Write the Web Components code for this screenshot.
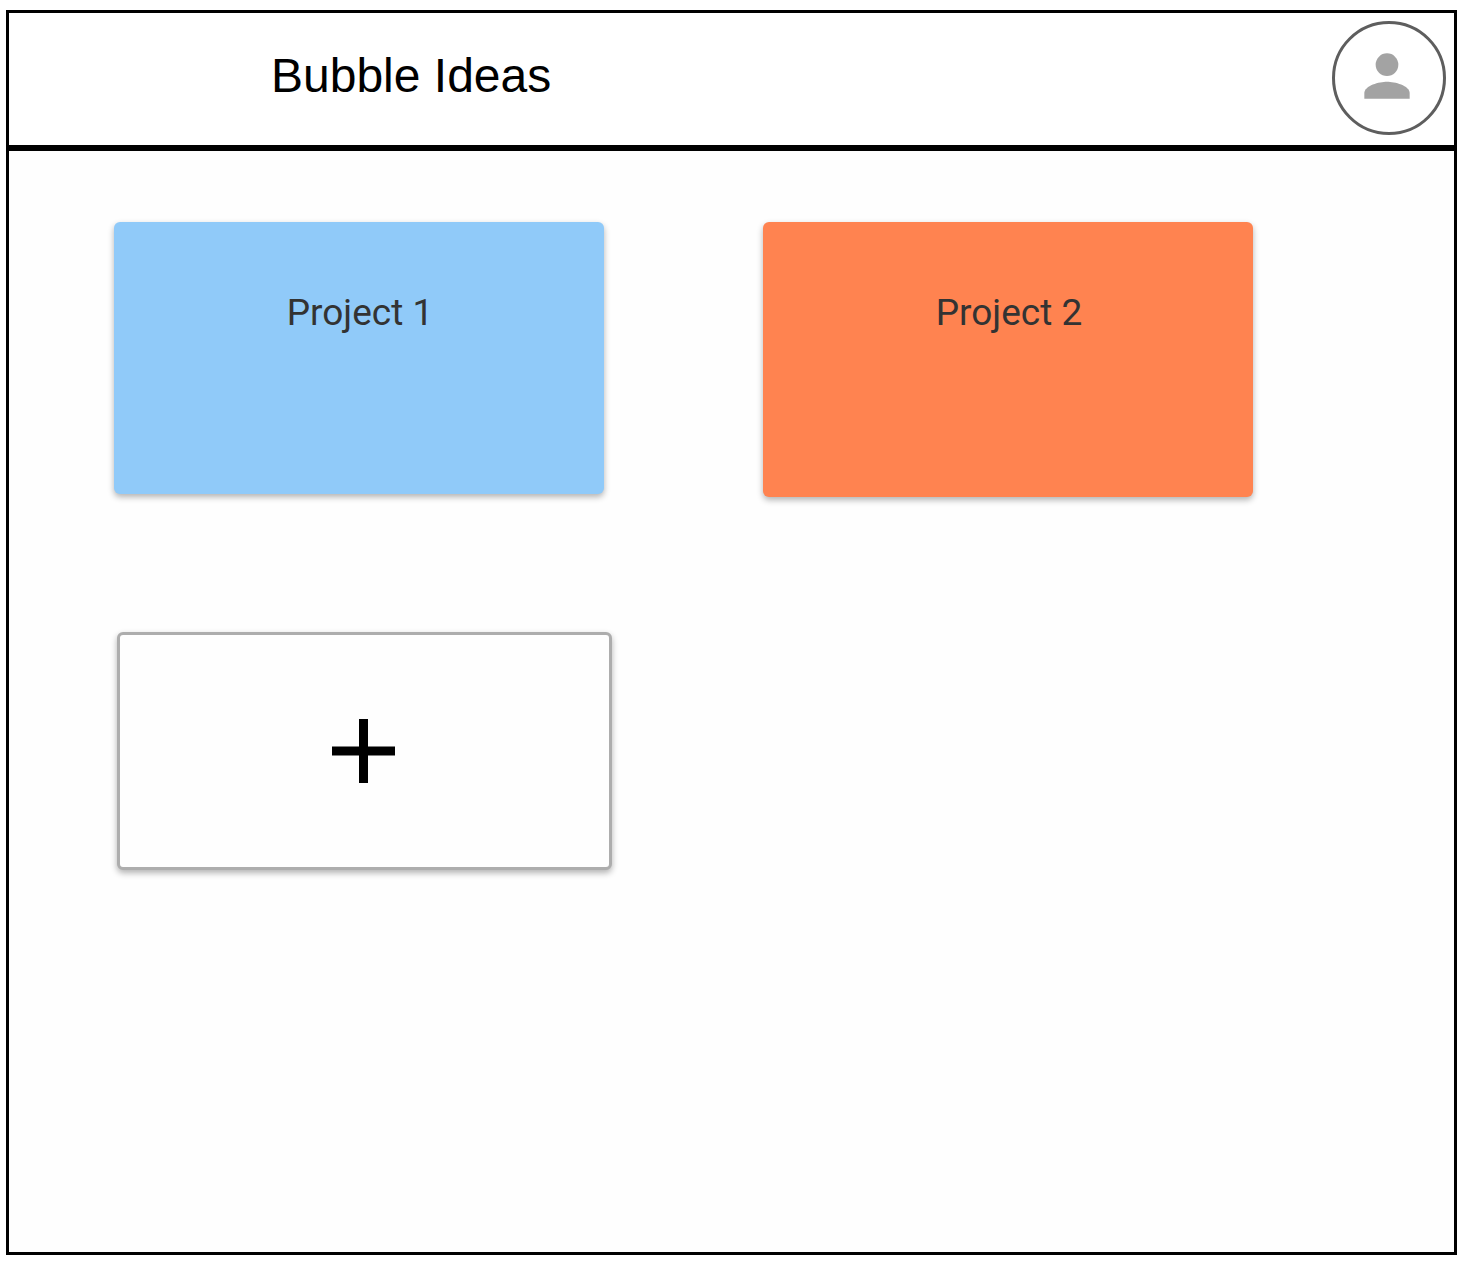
<!DOCTYPE html>
<html lang="en">
<head>
<meta charset="utf-8">
<title>Bubble Ideas</title>
<style>
  body { margin: 0; background: #fff; }
</style>
</head>
<body>
<idea-app>
  <idea-header slot="header">Bubble Ideas</idea-header>
  <project-card color="blue">Project 1</project-card>
  <project-card color="orange">Project 2</project-card>
  <add-card></add-card>
</idea-app>
<script>
class IdeaElement extends HTMLElement {
  constructor() {
    super();
    this.attachShadow({ mode: "open" }).innerHTML = this.constructor.markup;
  }
}

customElements.define("idea-app", class extends IdeaElement {
  static markup = `
    <style>
      :host { display: flex; box-sizing: border-box; min-height: 100vh; padding: 10px 9px 13px 6px; }
      .frame { flex: 1; display: flex; flex-direction: column; border: 3px solid #000; background: #fefefe; }
      main {
        display: grid; grid-template-columns: 1fr 1fr; align-items: start;
        gap: 135px 159px; padding: 71px 201px 71px 105px;
      }
    </style>
    <div class="frame">
      <slot name="header"></slot>
      <main><slot></slot></main>
    </div>`;
});

customElements.define("idea-header", class extends IdeaElement {
  static markup = `
    <style>
      :host { display: block; }
      header {
        display: flex; align-items: center; justify-content: space-between;
        box-sizing: border-box; height: 138px; padding: 0 8px 2px 262px;
        border-bottom: 6px solid #000; background: #fff;
      }
      h1 { margin: 0; padding-bottom: 4px; font: 400 48px/56px "Liberation Sans", Arial, sans-serif; color: #000; }
      button {
        display: flex; align-items: center; justify-content: center; box-sizing: border-box;
        width: 114px; height: 114px; padding: 0 5px 5px 0;
        border: 3px solid #5e5e5e; border-radius: 50%; background: #fff;
      }
      svg { width: 68px; height: 68px; fill: #a3a3a3; }
    </style>
    <header>
      <h1><slot></slot></h1>
      <button type="button" aria-label="Account">
        <svg viewBox="0 0 24 24" aria-hidden="true"><circle cx="12" cy="8" r="4"/><path d="M12 14c-2.67 0-8 1.34-8 4v2h16v-2c0-2.66-5.33-4-8-4z"/></svg>
      </button>
    </header>`;
});

customElements.define("project-card", class extends IdeaElement {
  static markup = `
    <style>
      :host { display: block; }
      article {
        box-sizing: border-box; height: 272px; padding: 69px 0 0 2px; border-radius: 6px;
        background: #90caf9; box-shadow: 0 3px 6px rgba(0, 0, 0, .3);
      }
      :host([color="orange"]) article { height: 275px; background: #ff8350; }
      h2 { margin: 0; text-align: center; font: 400 37px/44px Roboto, sans-serif; color: #333; }
    </style>
    <article><h2><slot></slot></h2></article>`;
});

customElements.define("add-card", class extends IdeaElement {
  static markup = `
    <style>
      :host { display: block; margin: 0 -8px 0 3px; }
      button {
        display: flex; align-items: center; justify-content: center; box-sizing: border-box;
        width: 100%; height: 238px; padding: 0 3px 0 0;
        border: 3px solid #adadad; border-radius: 6px; background: #fefefe;
        box-shadow: 0 3px 6px rgba(0, 0, 0, .3);
      }
      svg { width: 64px; height: 64px; fill: #000; }
    </style>
    <button type="button" aria-label="Add project">
      <svg viewBox="0 0 64 64" aria-hidden="true"><path d="M28 0h9v27.500h27v9H37V64h-9V36.500H1v-9h27z"/></svg>
    </button>`;
});
</script>
</body>
</html>
